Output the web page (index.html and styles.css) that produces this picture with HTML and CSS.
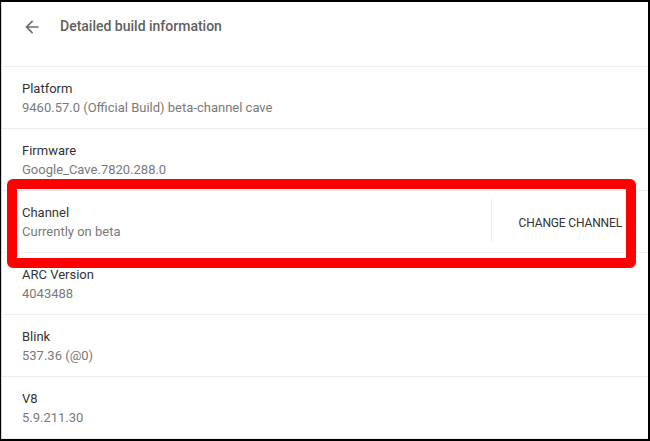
FILE: index.html
```html
<!DOCTYPE html>
<html>
<head>
<meta charset="utf-8">
<link rel="stylesheet" href="styles.css">
</head>
<body>
<div class="frame">
  <div class="page">
    <div class="header">
      <svg class="back" viewBox="0 0 24 24" width="20" height="20"><path d="M20 11H7.83l5.59-5.59L12 4l-8 8 8 8 1.41-1.41L7.83 13H20v-2z" fill="#6e6e6e"/></svg>
      <div class="title">Detailed build information</div>
    </div>
    <div class="row">
      <div class="info"><div class="label">Platform</div><div class="value">9460.57.0 (Official Build) beta-channel cave</div></div>
    </div>
    <div class="row">
      <div class="info"><div class="label">Firmware</div><div class="value">Google_Cave.7820.288.0</div></div>
    </div>
    <div class="row">
      <div class="info"><div class="label">Channel</div><div class="value">Currently on beta</div></div>
      <div class="sep"></div>
      <div class="button">CHANGE CHANNEL</div>
    </div>
    <div class="row">
      <div class="info"><div class="label">ARC Version</div><div class="value">4043488</div></div>
    </div>
    <div class="row">
      <div class="info"><div class="label">Blink</div><div class="value">537.36 (@0)</div></div>
    </div>
    <div class="row">
      <div class="info"><div class="label">V8</div><div class="value">5.9.211.30</div></div>
    </div>
  </div>
  <div class="highlight"></div>
</div>
</body>
</html>
```
FILE: styles.css
```css
html, body {
  margin: 0;
  padding: 0;
  background: #fff;
}
.frame {
  position: relative;
  width: 650px;
  height: 441px;
  box-sizing: border-box;
  border-top: 2px solid #000;
  border-left: 1px solid #000;
  border-right: 2px solid #000;
  border-bottom: 2px solid #000;
  overflow: hidden;
  font-family: Roboto, "Liberation Sans", sans-serif;
}
.page {
  height: 100%;
  border-left: 1px solid #d8d8d8;
  box-sizing: border-box;
}
.header {
  height: 65px;
  border-bottom: 1px solid #eeeeee;
  display: flex;
  align-items: flex-start;
  padding-top: 14px;
  box-sizing: border-box;
}
.back {
  margin-left: 20px;
  margin-top: 1px;
  flex: none;
}
.title {
  margin-left: 18px;
  font-size: 14px;
  font-weight: 500;
  line-height: 20px;
  color: #5f5f5f;
}
.row {
  height: 62px;
  box-sizing: border-box;
  border-bottom: 1px solid #eeeeee;
  display: flex;
  align-items: stretch;
}
.info {
  flex: 1;
  padding-left: 20px;
  padding-top: 13px;
}
.label {
  font-size: 13px;
  line-height: 18px;
  color: #333;
}
.value {
  font-size: 13px;
  line-height: 18px;
  margin-top: 1px;
  color: #7a7a7a;
}
.sep {
  width: 1px;
  background: #ececec;
  margin: 8px 0 10px;
}
.button {
  display: flex;
  align-items: center;
  padding: 2px 26px 0 27px;
  font-size: 12px;
  color: #333;
  letter-spacing: -0.15px;
}
.highlight {
  position: absolute;
  left: 6px;
  top: 177px;
  width: 629px;
  height: 89px;
  box-sizing: border-box;
  border: 10px solid #f00;
  border-radius: 6px;
}
```
